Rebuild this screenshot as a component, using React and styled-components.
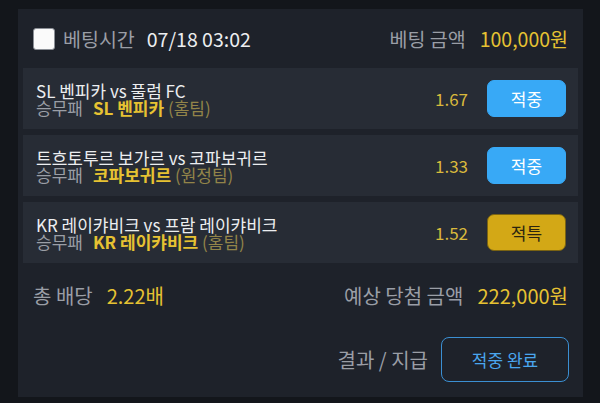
import React from "react";
import styled, { createGlobalStyle } from "styled-components";

const Global = createGlobalStyle`
  html, body { margin: 0; padding: 0; background: #13161b; }
  body { font-family: "Noto Sans CJK KR", "Noto Sans", sans-serif; width: 600px; height: 403px; overflow: hidden; }
`;

const Page = styled.div`
  width: 600px;
  height: 403px;
  padding: 9px 0 0 18px;
  box-sizing: border-box;
`;

const Card = styled.div`
  width: 565px;
  height: 388px;
  box-sizing: border-box;
  background: #1e222a;
  padding: 0 5px;
  display: flex;
  flex-direction: column;
`;

const Header = styled.div`
  height: 59px;
  display: flex;
  align-items: center;
  padding: 0 10px;
  font-size: 19.5px;
`;

const Check = styled.span`
  width: 20px;
  height: 20px;
  border: 1px solid #8b8f96;
  border-radius: 3px;
  background: #fafafa;
  margin-right: 8px;
`;

const Label = styled.span`
  color: #9a9ea6;
  margin-right: ${(p) => p.$gap || 0}px;
`;

const Value = styled.span`
  color: ${(p) => (p.$gold ? "#e6c232" : "#eceef0")};
`;

const Spacer = styled.div`
  flex: 1;
`;

const List = styled.div`
  display: flex;
  flex-direction: column;
  gap: 6px;
`;

const Row = styled.div`
  height: 61px;
  background: #272c35;
  display: flex;
  align-items: center;
  padding: 0 12px 0 13px;
`;

const Info = styled.div`
  flex: 1;
  font-size: 17px;
  line-height: 17px;
`;

const Title = styled.div`
  color: #eceef0;
`;

const Sub = styled.div`
  display: flex;
  gap: 10px;
  color: #9a9ea6;
`;

const Pick = styled.span`
  color: #e6c232;
  font-weight: 700;
`;

const Side = styled.span`
  color: #928449;
  font-weight: 400;
`;

const Odds = styled.span`
  color: #d9b93c;
  font-size: 17px;
  margin-right: 19px;
`;

const Result = styled.div`
  width: 79px;
  height: 37px;
  box-sizing: border-box;
  border-radius: 7px;
  display: flex;
  align-items: center;
  justify-content: center;
  font-size: 17px;
  background: ${(p) => (p.$special ? "#d3a816" : "#38a9f6")};
  border: 1px solid ${(p) => (p.$special ? "#7a6312" : "#38a9f6")};
  color: ${(p) => (p.$special ? "#2a2410" : "#ffffff")};
`;

const Summary = styled.div`
  margin-top: 18px;
  height: 28px;
  display: flex;
  align-items: center;
  padding: 0 10px;
  font-size: 20px;
`;

const Footer = styled.div`
  margin-top: 28px;
  display: flex;
  align-items: center;
  justify-content: flex-end;
  padding: 0 9px 0 10px;
  font-size: 20px;
`;

const Outline = styled.div`
  width: 128px;
  height: 45px;
  box-sizing: border-box;
  border: 1.5px solid #3b8fd2;
  border-radius: 8px;
  display: flex;
  align-items: center;
  justify-content: center;
  color: #4aa6ee;
  font-size: 17px;
  margin-left: 13px;
`;

const rows = [
  { title: "SL 벤피카 vs 풀럼 FC", pick: "SL 벤피카", side: "(홈팀)", odds: "1.67", result: "적중" },
  { title: "트흐토투르 보가르 vs 코파보귀르", pick: "코파보귀르", side: "(원정팀)", odds: "1.33", result: "적중" },
  { title: "KR 레이캬비크 vs 프람 레이캬비크", pick: "KR 레이캬비크", side: "(홈팀)", odds: "1.52", result: "적특", special: true },
];

export default function App() {
  return (
    <Page>
      <Global />
      <Card>
        <Header>
          <Check />
          <Label $gap={12}>베팅시간</Label>
          <Value>07/18 03:02</Value>
          <Spacer />
          <Label $gap={14}>베팅 금액</Label>
          <Value $gold>100,000원</Value>
        </Header>
        <List>
          {rows.map((r) => (
            <Row key={r.title}>
              <Info>
                <Title>{r.title}</Title>
                <Sub>
                  <span>승무패</span>
                  <span>
                    <Pick>{r.pick}</Pick> <Side>{r.side}</Side>
                  </span>
                </Sub>
              </Info>
              <Odds>{r.odds}</Odds>
              <Result $special={r.special}>{r.result}</Result>
            </Row>
          ))}
        </List>
        <Summary>
          <Label $gap={14}>총 배당</Label>
          <Value $gold>2.22배</Value>
          <Spacer />
          <Label $gap={14}>예상 당첨 금액</Label>
          <Value $gold>222,000원</Value>
        </Summary>
        <Footer>
          <Label>결과 / 지급</Label>
          <Outline>적중 완료</Outline>
        </Footer>
      </Card>
    </Page>
  );
}
